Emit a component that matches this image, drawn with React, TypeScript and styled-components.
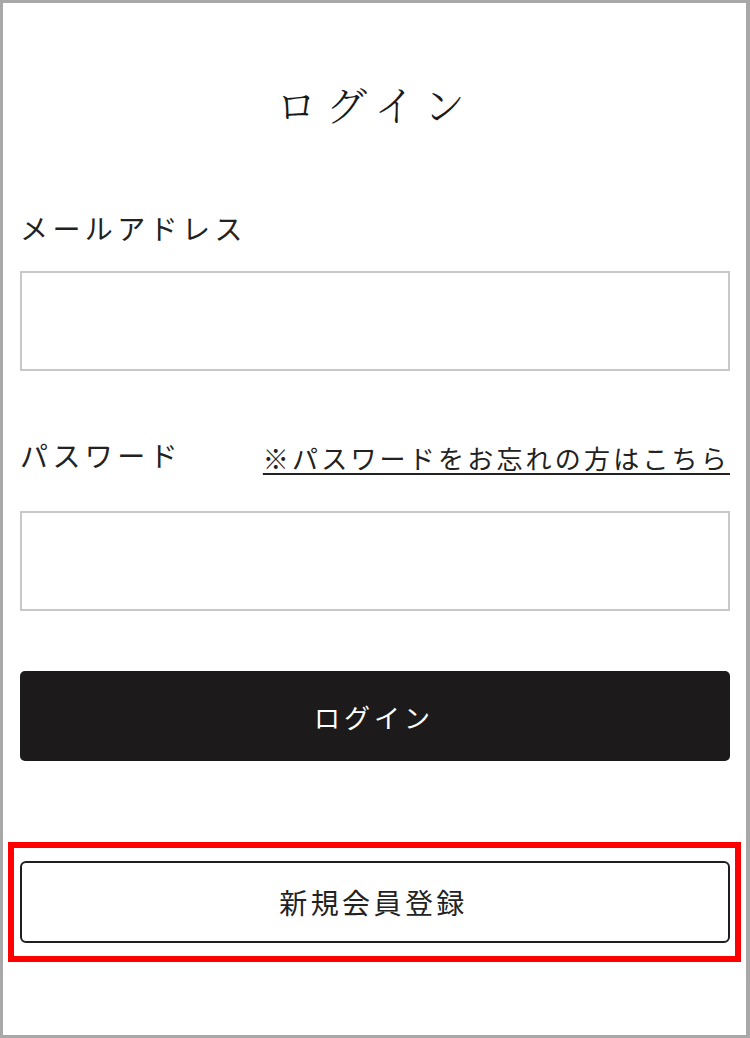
import React from "react";
import styled, { createGlobalStyle } from "styled-components";

const GlobalStyle = createGlobalStyle`
  html, body {
    margin: 0;
    padding: 0;
    background: #ffffff;
  }
  body {
    font-family: "Noto Sans CJK JP", "Noto Sans", sans-serif;
    color: #222;
  }
  * { box-sizing: border-box; }
`;

const Frame = styled.div`
  width: 750px;
  height: 1038px;
  border: 3px solid #a8a8a8;
  border-right-width: 4px;
  background: #fff;
  padding: 0 16px 0 17px;
  display: flex;
  flex-direction: column;
`;

const Title = styled.h1`
  margin: 80px 0 0;
  height: 42px;
  line-height: 42px;
  font-family: "Noto Serif CJK JP", "Noto Sans CJK JP", serif;
  font-weight: 300;
  font-size: 41px;
  letter-spacing: 9px;
  padding-left: 0;
  text-align: center;
  color: #1a1a1a;
`;

const Label = styled.label<{ $top: number }>`
  display: block;
  margin-top: ${(p) => p.$top}px;
  font-size: 28px;
  line-height: 28px;
  height: 28px;
  letter-spacing: 4.4px;
  color: #222;
  font-weight: 400;
`;

const Input = styled.input<{ $top: number }>`
  display: block;
  width: 100%;
  height: 100px;
  margin-top: ${(p) => p.$top}px;
  border: 2px solid #c8c8c8;
  border-radius: 0;
  background: #fff;
  outline: none;
  padding: 0 16px;
  font-size: 26px;
`;

const LabelRow = styled.div`
  display: flex;
  align-items: flex-start;
  justify-content: space-between;
  margin-top: 70px;
  height: 31px;
`;

const RowLabel = styled.label`
  font-size: 28px;
  line-height: 28px;
  letter-spacing: 4.4px;
  color: #222;
`;

const ForgotLink = styled.a`
  margin-top: 3px;
  font-size: 26px;
  line-height: 28px;
  letter-spacing: 3.2px;
  margin-right: 0;
  color: #222;
  text-decoration: underline;
  text-decoration-thickness: 2px;
  text-underline-offset: 4px;
  cursor: pointer;
`;

const PrimaryButton = styled.button`
  display: flex;
  align-items: center;
  justify-content: center;
  width: 100%;
  height: 90px;
  margin-top: 60px;
  background: #1c1a1b;
  color: #fff;
  border: none;
  border-radius: 5px;
  font-family: "Noto Sans CJK JP", sans-serif;
  font-size: 26px;
  letter-spacing: 4px;
  padding-left: 4px;
  cursor: pointer;
`;

const Highlight = styled.div`
  position: relative;
  margin-top: 100px;
  &::before {
    content: "";
    position: absolute;
    top: -19px;
    bottom: -19px;
    left: -12px;
    right: -11px;
    border: 6px solid #ff0000;
    pointer-events: none;
  }
`;

const OutlineButton = styled.button`
  display: flex;
  align-items: center;
  justify-content: center;
  width: 100%;
  height: 82px;
  background: #fff;
  color: #222;
  border: 2px solid #1e1e1e;
  border-radius: 6px;
  font-family: "Noto Sans CJK JP", sans-serif;
  font-size: 28px;
  letter-spacing: 3.4px;
  padding-left: 3px;
  cursor: pointer;
`;

export default function App() {
  return (
    <>
      <GlobalStyle />
      <Frame>
        <Title>ログイン</Title>
        <Label $top={89}>メールアドレス</Label>
        <Input $top={29} type="email" />
        <LabelRow>
          <RowLabel>パスワード</RowLabel>
          <ForgotLink>※パスワードをお忘れの方はこちら</ForgotLink>
        </LabelRow>
        <Input $top={39} type="password" />
        <PrimaryButton>ログイン</PrimaryButton>
        <Highlight>
          <OutlineButton>新規会員登録</OutlineButton>
        </Highlight>
      </Frame>
    </>
  );
}
